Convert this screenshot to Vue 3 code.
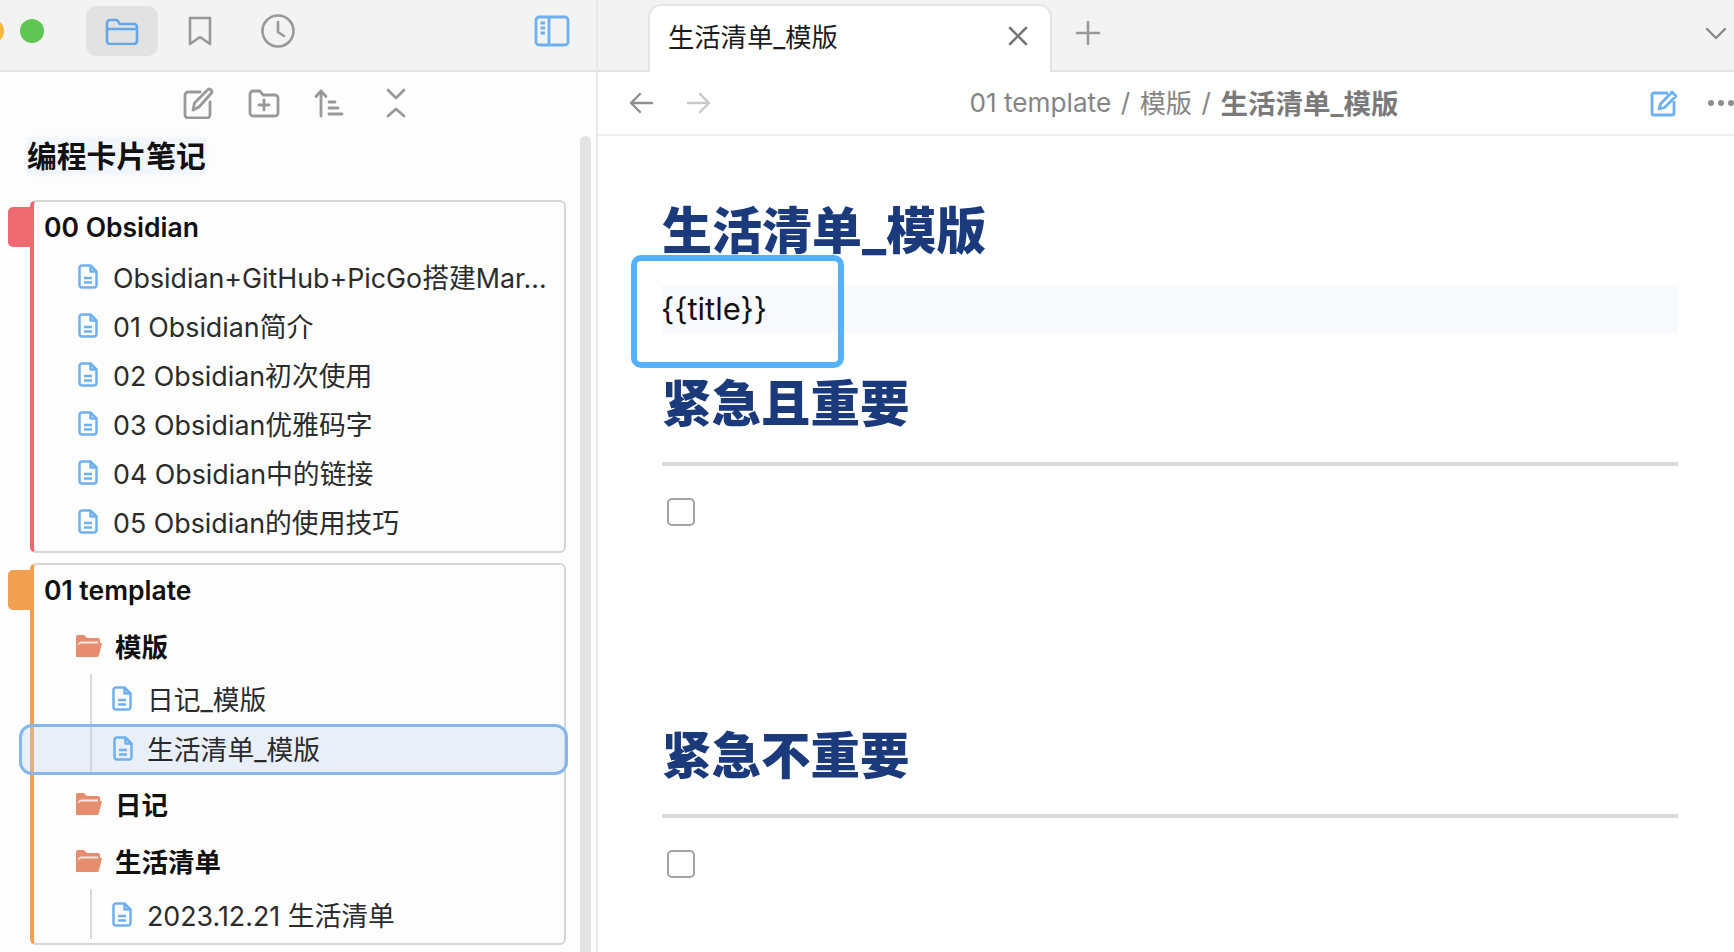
<script setup>
const first = ['Obsidian+GitHub+PicGo搭建Mar…', '01 Obsidian简介', '02 Obsidian初次使用', '03 Obsidian优雅码字', '04 Obsidian中的链接', '05 Obsidian的使用技巧']
const sections = ['紧急且重要', '紧急不重要']
const tools = [
  { d: 'M18 5H6a3 3 0 0 0-3 3v20a3 3 0 0 0 3 3h19a3 3 0 0 0 3-3V15M11 23l1.500-7L26 2.500c1-1 2-.5 3 .5s1.500 2 .5 3L17 20l-6 3z' },
  { d: 'M2 7a3 3 0 0 1 3-3h7l3 4h12a3 3 0 0 1 3 3v15a3 3 0 0 1-3 3H5a3 3 0 0 1-3-3V7zM16 13v10M11 18h10' },
  { d: 'M7 29V4M2 9.500L7 4l5 5.500M15 15h6M15 21h9M15 27h13' },
  { d: 'M8 3l8 8 8-8M8 29l8-7 8 7' }
]
</script>

<template>
  <div class="app">
    <aside class="side">
      <header class="side-top">
        <div class="lights"><span class="light yellow"></span><span class="light green"></span></div>
        <div class="top-tab active">
          <svg width="34" height="28" viewBox="0 0 34 28" fill="none" stroke="#64a6e8" stroke-width="2.600" stroke-linejoin="round"><path d="M2 6a3 3 0 0 1 3-3h7l3 4h14a3 3 0 0 1 3 3v14a3 3 0 0 1-3 3H5a3 3 0 0 1-3-3V6zM2 12h30"/></svg>
        </div>
        <div class="top-tab">
          <svg width="26" height="32" viewBox="0 0 26 32" fill="none" stroke="#999" stroke-width="2.600" stroke-linejoin="round"><path d="M3 3h20v26l-10-7-10 7V3z"/></svg>
        </div>
        <div class="top-tab">
          <svg width="36" height="36" viewBox="0 0 36 36" fill="none" stroke="#999" stroke-width="2.600" stroke-linecap="round"><circle cx="18" cy="18" r="15.500"/><path d="M18 9v10l6 4"/></svg>
        </div>
        <svg class="panel-icon" width="36" height="32" viewBox="0 0 36 32" fill="none" stroke="#6fb0ee" stroke-width="2.800"><rect x="2" y="2" width="32" height="28" rx="3"/><path d="M15 2v28M6.500 8h4.500M6.500 13h4.500M6.500 18h4.500"/></svg>
      </header>

      <div class="side-body">
        <div class="tools">
          <svg v-for="(t, i) in tools" :key="i" width="32" height="32" viewBox="0 0 32 32" fill="none" stroke="#999" stroke-width="2.800" stroke-linejoin="round" stroke-linecap="round"><path :d="t.d"/></svg>
        </div>
        <div class="tree-scroll">
          <div class="tree">
            <h2 class="vault"><span>编程卡片笔记</span></h2>

            <section class="card red">
              <i class="tag"></i>
              <div class="card-title">00 Obsidian</div>
              <div v-for="f in first" :key="f" class="file">
                <svg class="file-icon" width="20" height="25" viewBox="0 0 20 25" fill="none" stroke="#6fb0ee" stroke-width="2.500" stroke-linejoin="round"><path d="M1.500 4a2.500 2.500 0 0 1 2.500-2.500h8.500l6 6V21a2.500 2.500 0 0 1-2.500 2.500H4A2.500 2.500 0 0 1 1.500 21V4zM12.500 1.500v6h6M6 14h8M6 18.500h8"/></svg>
                <span>{{ f }}</span>
              </div>
            </section>

            <section class="card orange">
              <i class="tag"></i>
              <div class="card-title second">01 template</div>

              <div class="folder">
                <svg width="26" height="22" viewBox="0 0 26 22"><path fill="#e68d6f" d="M0 2a2 2 0 0 1 2-2h6l3 3h11a2 2 0 0 1 2 2v3h2l-3 12a2 2 0 0 1-2 2H0V2z"/><path fill="#fbe9e2" d="M2 11.500C2.500 9.500 3.500 8.500 5 8.500h17v-2H6c-2.500 0-4 1.500-4 3.500v1.500z"/></svg>
                <span>模版</span>
              </div>
              <div class="children">
                <div class="file nested">
                  <svg class="file-icon" width="20" height="25" viewBox="0 0 20 25" fill="none" stroke="#6fb0ee" stroke-width="2.500" stroke-linejoin="round"><path d="M1.500 4a2.500 2.500 0 0 1 2.500-2.500h8.500l6 6V21a2.500 2.500 0 0 1-2.500 2.500H4A2.500 2.500 0 0 1 1.500 21V4zM12.500 1.500v6h6M6 14h8M6 18.500h8"/></svg>
                  <span>日记_模版</span>
                </div>
                <div class="file selected">
                  <svg class="file-icon" width="20" height="25" viewBox="0 0 20 25" fill="none" stroke="#6fb0ee" stroke-width="2.500" stroke-linejoin="round"><path d="M1.500 4a2.500 2.500 0 0 1 2.500-2.500h8.500l6 6V21a2.500 2.500 0 0 1-2.500 2.500H4A2.500 2.500 0 0 1 1.500 21V4zM12.500 1.500v6h6M6 14h8M6 18.500h8"/></svg>
                  <span>生活清单_模版</span>
                </div>
              </div>

              <div class="folder">
                <svg width="26" height="22" viewBox="0 0 26 22"><path fill="#e68d6f" d="M0 2a2 2 0 0 1 2-2h6l3 3h11a2 2 0 0 1 2 2v3h2l-3 12a2 2 0 0 1-2 2H0V2z"/><path fill="#fbe9e2" d="M2 11.500C2.500 9.500 3.500 8.500 5 8.500h17v-2H6c-2.500 0-4 1.500-4 3.500v1.500z"/></svg>
                <span>日记</span>
              </div>
              <div class="folder">
                <svg width="26" height="22" viewBox="0 0 26 22"><path fill="#e68d6f" d="M0 2a2 2 0 0 1 2-2h6l3 3h11a2 2 0 0 1 2 2v3h2l-3 12a2 2 0 0 1-2 2H0V2z"/><path fill="#fbe9e2" d="M2 11.500C2.500 9.500 3.500 8.500 5 8.500h17v-2H6c-2.500 0-4 1.500-4 3.500v1.500z"/></svg>
                <span>生活清单</span>
              </div>
              <div class="children last">
                <div class="file nested">
                  <svg class="file-icon" width="20" height="25" viewBox="0 0 20 25" fill="none" stroke="#6fb0ee" stroke-width="2.500" stroke-linejoin="round"><path d="M1.500 4a2.500 2.500 0 0 1 2.500-2.500h8.500l6 6V21a2.500 2.500 0 0 1-2.500 2.500H4A2.500 2.500 0 0 1 1.500 21V4zM12.500 1.500v6h6M6 14h8M6 18.500h8"/></svg>
                  <span>2023.12.21 生活清单</span>
                </div>
              </div>
            </section>
          </div>
          <div class="scrollbar"></div>
        </div>
      </div>
    </aside>

    <main class="main">
      <header class="tabbar">
        <div class="tab">
          <span class="tab-label">生活清单_模版</span>
          <svg width="22" height="22" viewBox="0 0 22 22" stroke="#777" stroke-width="2.600" stroke-linecap="round"><path d="M3 3l16 16M19 3L3 19"/></svg>
        </div>
        <svg class="plus" width="26" height="26" viewBox="0 0 26 26" stroke="#999" stroke-width="2.600" stroke-linecap="round"><path d="M13 2v22M2 13h22"/></svg>
        <svg class="chevron" width="24" height="16" viewBox="0 0 24 16" fill="none" stroke="#888" stroke-width="2.400" stroke-linecap="round" stroke-linejoin="round"><path d="M3 3l9 9 9-9"/></svg>
      </header>

      <nav class="navbar">
        <div class="arrows">
          <svg width="26" height="24" viewBox="0 0 26 24" fill="none" stroke="#8f8f8f" stroke-width="2.400" stroke-linecap="round" stroke-linejoin="round"><path d="M24 12H3M12 3l-9 9 9 9"/></svg>
          <svg width="26" height="24" viewBox="0 0 26 24" fill="none" stroke="#c8c8c8" stroke-width="2.400" stroke-linecap="round" stroke-linejoin="round"><path d="M2 12h21M14 3l9 9-9 9"/></svg>
        </div>
        <div class="crumbs"><span>01 template</span><em>/</em><span>模版</span><em>/</em><strong>生活清单_模版</strong></div>
        <div class="nav-actions">
          <svg width="28" height="28" viewBox="0 0 28 28" fill="none" stroke="#6fb0ee" stroke-width="2.800" stroke-linejoin="round"><path d="M18 4H4a2 2 0 0 0-2 2v18a2 2 0 0 0 2 2h18a2 2 0 0 0 2-2V12M9 20l1.500-5L22 3l4 4-11.500 11.500L9 20z"/></svg>
          <svg width="28" height="8" viewBox="0 0 28 8" fill="#8f8f8f"><circle cx="4" cy="4" r="3"/><circle cx="14" cy="4" r="3"/><circle cx="24" cy="4" r="3"/></svg>
        </div>
      </nav>

      <article class="doc">
        <h1>生活清单_模版</h1>
        <p class="tpl">{{ '{' + '{title}' + '}' }}</p>
        <div class="focus-box"></div>
        <section v-for="s in sections" :key="s" class="quad">
          <h2>{{ s }}</h2>
          <hr />
          <span class="check"></span>
        </section>
      </article>
    </main>
  </div>
</template>

<style>
html, body { margin: 0; overflow: hidden; background: #fff; }
</style>

<style scoped>
.app {
  display: grid;
  grid-template-columns: 598px 1fr;
  width: 1734px;
  height: 952px;
  overflow: hidden;
  font-family: Inter, "Noto Sans CJK SC", sans-serif;
  color: #222;
}
.side { display: flex; flex-direction: column; border-right: 2px solid #e8e8e8; box-sizing: border-box; min-width: 0; background: #fdfdfd; overflow: hidden; }
.side-top {
  height: 72px;
  box-sizing: border-box;
  display: flex;
  align-items: center;
  background: #f3f3f3;
  border-bottom: 2px solid #e3e3e3;
  padding: 0 26px 8px 0;
}
.lights { display: flex; gap: 16px; margin-left: -20px; width: 106px; flex: none; }
.light { width: 24px; height: 24px; border-radius: 50%; flex: none; }
.yellow { background: #f6b73c; }
.green { background: #5fc653; }
.top-tab { width: 72px; height: 50px; border-radius: 10px; display: flex; align-items: center; justify-content: center; margin-right: 6px; flex: none; }
.active { background: #e2e2e2; }
.panel-icon { margin-left: auto; }

.side-body { flex: 1; display: flex; flex-direction: column; min-height: 0; }
.tools { height: 62px; display: flex; align-items: center; justify-content: center; gap: 34px; padding-right: 2px; flex: none; }
.tree-scroll { flex: 1; display: flex; min-height: 0; overflow: hidden; }
.tree { flex: 1; min-width: 0; padding-left: 8px; }
.scrollbar { width: 11px; margin: 2px 5px 0 14px; background: #e3e3e3; border-radius: 6px 6px 0 0; flex: none; }
.vault { margin: 1px 0 22px 19px; height: 43px; font-size: 29.800px; line-height: 43px; font-weight: 700; color: #111; }
.vault span { background: #f1f6fd; box-shadow: 0 0 6px #eef3fc; }

.card {
  position: relative;
  margin-left: 22px;
  box-sizing: border-box;
  border: 2px solid #d6d6d6;
  border-left-width: 4px;
  border-radius: 6px;
  padding-left: 10px;
  width: 536px;
}
.red { border-left-color: #ea6a6f; height: 353px; margin-bottom: 10px; }
.orange { border-left-color: #f1a052; height: 382px; }
.tag { position: absolute; left: -26px; top: 5px; width: 24px; height: 40px; border-radius: 5px 0 0 5px; }
.red .tag { background: #ee6a70; }
.orange .tag { background: #f1a052; }
.card-title { height: 50px; font-size: 26.500px; line-height: 50px; font-weight: 600; color: #111; }
.card-title.second { height: 52px; line-height: 50px; }

.file { display: flex; align-items: center; height: 49px; font-size: 26.800px; color: #2b2b2b; box-sizing: border-box; padding-left: 34px; }
.file span { margin-left: 15px; white-space: nowrap; }
.file-icon { flex: none; }
.folder { display: flex; align-items: center; height: 57px; padding-left: 32px; font-size: 26.500px; font-weight: 700; color: #111; }
.folder span { margin-left: 13px; }
.children { margin-left: 46px; border-left: 2px solid #d9d9d9; }
.children.last { padding-top: 1px; }
.nested { padding-left: 20px; height: 49px; }
.nested span { margin-left: 15px; }
.selected {
  height: 51px;
  margin: 1px -4px 0 -73px;
  padding: 0 0 2px 91px;
  background: rgba(190, 210, 240, .32);
  border: 3px solid #86b6ea;
  border-radius: 13px;
}
.selected span { margin-left: 14px; }

.main { display: flex; flex-direction: column; min-width: 0; }
.tabbar {
  height: 72px;
  box-sizing: border-box;
  background: #f3f3f3;
  border-bottom: 2px solid #e3e3e3;
  display: flex;
  align-items: flex-end;
  padding-left: 50px;
}
.tab {
  width: 404px;
  height: 68px;
  margin-bottom: -2px;
  box-sizing: border-box;
  background: #fff;
  border: 2px solid #e3e3e3;
  border-bottom: 0;
  border-radius: 13px 13px 0 0;
  display: flex;
  align-items: center;
  justify-content: space-between;
  padding: 0 21px 6px 18px;
}
.tab-label { font-size: 26.300px; color: #1c1c1c; position: relative; top: -1px; }
.plus { align-self: center; margin: 0 0 4px 23px; }
.chevron { align-self: center; margin: 0 6px 2px auto; }

.navbar {
  height: 64px;
  box-sizing: border-box;
  border-bottom: 2px solid #f0f0f0;
  display: flex;
  align-items: center;
  position: relative;
  padding: 0 0 0 30px;
  justify-content: space-between;
  overflow: hidden;
}
.arrows { display: flex; gap: 32px; }
.crumbs { display: flex; align-items: center; gap: 9.500px; font-size: 26.200px; color: #858585; white-space: nowrap; margin-left: 6px; position: relative; top: -1px; }
.crumbs em { font-style: normal; }
.crumbs strong { font-size: 27.500px; font-weight: 700; color: #7a7a7a; }
.nav-actions { display: flex; align-items: center; gap: 29px; margin-right: -1px; }

.doc { position: relative; padding: 61px 56px 0 64px; flex: 1; overflow: hidden; }
.doc h1 { margin: 0 0 20px; font-size: 50px; line-height: 68px; font-weight: 800; color: #1a3a7c; }
.tpl { margin: 0; height: 48px; line-height: 48px; font-size: 31px; text-indent: -1px; background: #f7f9fc; color: #111; }
.focus-box {
  position: absolute;
  left: 33px;
  top: 119px;
  width: 213px;
  height: 113px;
  box-sizing: border-box;
  border: 6px solid #54b2fd;
  border-radius: 10px;
}
.quad { height: 352px; margin-top: 38px; margin-bottom: -38px; }
.quad h2 { margin: 0 0 25px; font-size: 49.500px; line-height: 66px; font-weight: 800; color: #1a3a7c; }
.quad hr { margin: 0; height: 4px; border: 0; background: #dcdcdc; }
.check { display: block; margin: 32px 0 0 5px; width: 28px; height: 28px; box-sizing: border-box; border: 2.500px solid #a3a3a3; border-radius: 5px; }
</style>
